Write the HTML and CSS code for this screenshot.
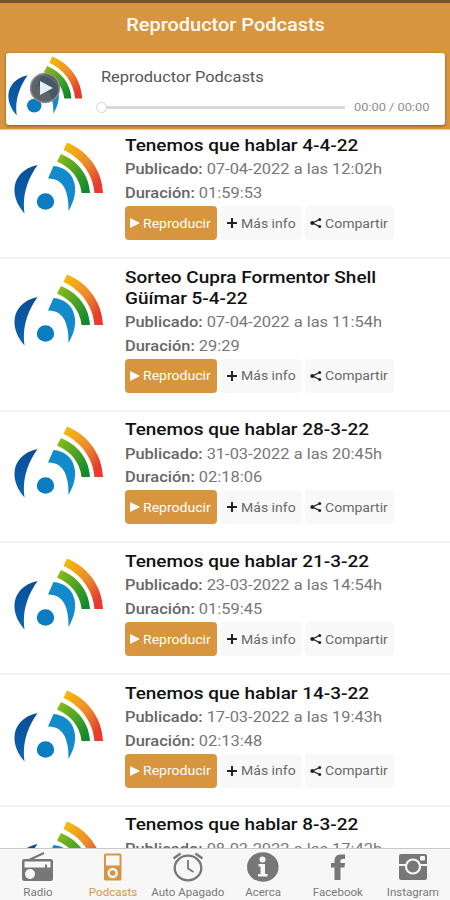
FILE: index.html
```
<!DOCTYPE html>
<html lang="es">
<head>
  <meta charset="UTF-8" />
  <title>Reproductor Podcasts</title>
  <link rel="stylesheet" href="styles.css">
</head>
<body>

<svg class="defs" width="0" height="0">
  <defs>
    <linearGradient id="warm" x1="0" y1="0" x2="1" y2="1">
      <stop offset="0.1" stop-color="#f2b70c" />
      <stop offset="0.5" stop-color="#ec8a2d" />
      <stop offset="0.85" stop-color="#e63b2e" />
    </linearGradient>
    <linearGradient id="green" x1="0" y1="0" x2="1" y2="1">
      <stop offset="0.1" stop-color="#84b81c" />
      <stop offset="0.9" stop-color="#118a2c" />
    </linearGradient>
    <linearGradient id="navy" x1="0" y1="0" x2="0" y2="1">
      <stop offset="0" stop-color="#0a4d96" />
      <stop offset="1" stop-color="#0b66b4" />
    </linearGradient>
    <symbol id="logo" viewBox="0 0 90 72">
      <path fill="url(#warm)" d="M53 0.500C74 9 88 28 89 51H80.500C79 32 67 16 49.500 8Z" />
      <path fill="url(#green)" d="M47 12C64 19 75 33 76 51H67.500C66 36 57 26 43 19.500Z" />
      <path fill="url(#navy)" d="M23.500 23C-1 28 -7 52 10.500 71.500C8 54 13 38 23.500 23Z" />
      <path fill="#118bcb" d="M39.500 24C61 26 67.500 48 54.500 69C55 51 50 36 34 36.500Z" />
      <ellipse cx="31.500" cy="59.500" rx="8.700" ry="8.300" fill="#0b7cc2" />
    </symbol>
    <symbol id="play" viewBox="0 0 10 12"><path fill="currentColor" d="M0 1L10 6L0 11Z" /></symbol>
    <symbol id="plus" viewBox="0 0 10 12"><path stroke="currentColor" stroke-width="2" d="M0 6H10M5 1V11" /></symbol>
    <symbol id="share" viewBox="0 0 12 12">
      <path fill="none" stroke="currentColor" stroke-width="1.300" d="M9.500 2.500L2.500 6L9.500 9.500" />
      <circle cx="9.700" cy="2.500" r="1.500" fill="currentColor" />
      <circle cx="2.300" cy="6" r="2" fill="currentColor" />
      <circle cx="9.700" cy="9.500" r="1.500" fill="currentColor" />
    </symbol>
  </defs>
</svg>

<header>
  <h1><span>Reproductor Podcasts</span></h1>
  <div class="player">
    <div class="cover">
      <svg class="logo"><use href="#logo" /></svg>
      <svg class="cover-play" viewBox="0 0 32 32">
        <circle cx="16" cy="16" r="14.500" fill="#4b5358" fill-opacity="0.9" stroke="#8b9094" stroke-width="1.500" />
        <path fill="#e3eef6" d="M11 9L24 16L11 23Z" />
      </svg>
    </div>
    <div class="track">
      <p><span>Reproductor Podcasts</span></p>
      <div class="progress">
        <i class="knob"></i>
        <i class="bar"></i>
        <span class="time">00:00 / 00:00</span>
      </div>
    </div>
  </div>
</header>

<main id="list"></main>

<nav>
  <a>
    <svg viewBox="0 0 32 30">
      <path stroke="currentColor" stroke-width="2" d="M8 7.500L22 1" />
      <rect x="0" y="7" width="31" height="22" rx="2.500" fill="currentColor" />
      <path fill="#f7f7f7" d="M2.500 9.500H28.500V15.500H25V12.500H23V15.500H2.500Z" />
      <circle cx="8" cy="22" r="5" fill="#f7f7f7" />
    </svg>
    <span>Radio</span>
  </a>
  <a class="active">
    <svg viewBox="0 0 32 30">
      <rect x="7" y="1.500" width="17.500" height="27" rx="1.500" fill="currentColor" />
      <rect x="9" y="3.500" width="13.500" height="10" fill="#f7f7f7" />
      <circle cx="15.700" cy="21" r="4" fill="none" stroke="#f7f7f7" stroke-width="2.500" />
    </svg>
    <span>Podcasts</span>
  </a>
  <a>
    <svg viewBox="0 0 32 30">
      <g fill="none" stroke="currentColor" stroke-width="2.300">
        <ellipse cx="16" cy="16" rx="13.300" ry="12.300" />
        <path d="M16 8V16.500L21.500 20" stroke-width="1.800" />
        <path d="M1.500 6.500L8.500 1.500M23.500 1.500L30.500 6.500" />
      </g>
    </svg>
    <span>Auto Apagado</span>
  </a>
  <a>
    <svg viewBox="0 0 32 30">
      <ellipse cx="15.800" cy="15" rx="15.800" ry="14.800" fill="currentColor" />
      <circle cx="15.500" cy="7.500" r="3" fill="#f7f7f7" />
      <path fill="#f7f7f7" d="M11.500 12H18V22H20.500V24.500H11V22H13.500V14.500H11.500Z" />
    </svg>
    <span>Acerca</span>
  </a>
  <a>
    <svg viewBox="0 0 32 30">
      <path fill="currentColor" d="M12.500 28V15.500H9V11H12.500V9C12.500 4.500 15 2.500 19 2.500H23V7H20.500C19 7 18.500 7.700 18.500 9V11H23L22.500 15.500H18.500V28Z" />
    </svg>
    <span>Facebook</span>
  </a>
  <a>
    <svg viewBox="0 0 32 30">
      <rect x="2" y="2" width="28" height="26" rx="2" fill="currentColor" />
      <path stroke="#f7f7f7" stroke-width="1.800" d="M2 13H9M23 13H30" />
      <circle cx="16" cy="14.500" r="7" fill="currentColor" stroke="#f7f7f7" stroke-width="2.200" />
      <rect x="23" y="4" width="5" height="4.500" rx="1" fill="#f7f7f7" />
    </svg>
    <span>Instagram</span>
  </a>
</nav>

<script src="script.js"></script>
</body>
</html>
```
FILE: styles.css
```
* {
  box-sizing: border-box;
}
body {
  font-family: Roboto, "Liberation Sans", sans-serif;
  background: #fff;
  margin: 0;
  height: 900px;
  display: flex;
  flex-direction: column;
  overflow: hidden;
}
h1, h2, p {
  margin: 0;
}
.defs {
  position: absolute;
}
/* wide lettering, stretched from the left edge */
h2 span, p span, .time, .btn span {
  display: inline-block;
  white-space: nowrap;
  transform: scaleX(1.115);
  transform-origin: left center;
}
p span {
  transform: scaleX(1.095);
}
.btn span {
  transform: scaleX(1.08);
}
header {
  flex: none;
  height: 130px;
  background: #d7953f;
  border-top: 3px solid #70532f;
  border-bottom: 1px solid #efc995;
  padding: 0 5px 0 6px;
}
h1 {
  height: 50px;
  line-height: 44px;
  text-align: center;
  font-size: 19px;
  font-weight: 500;
  color: #fffaf0;
}
h1 span {
  display: inline-block;
  transform: scaleX(1.05);
}
.player {
  height: 72px;
  display: flex;
  background: #fff;
  border-radius: 3px;
  box-shadow: 0 1px 3px #885611;
}
.cover {
  position: relative;
  width: 95px;
  padding: 3px 1.5px;
}
.cover .logo {
  width: 75px;
  height: 60px;
}
.cover-play {
  position: absolute;
  left: 23px;
  top: 19px;
  width: 32px;
  height: 32px;
}
.track {
  flex: 1;
  padding-top: 14px;
}
.track p {
  font-size: 15px;
  line-height: 20px;
  color: #555;
}
.progress {
  display: flex;
  align-items: center;
  height: 14px;
  margin: 13px 0 0 -5px;
}
.knob {
  width: 11px;
  height: 11px;
  border: 1px solid #ccd6df;
  border-radius: 50%;
  background: #fff;
}
.bar {
  width: 238px;
  height: 3px;
  background: #d9d9d9;
}
.time {
  margin-left: 9px;
  font-size: 11.5px;
  color: #909090;
}
main {
  flex: 1;
  overflow: hidden;
}
.item {
  display: flex;
  padding: 14.5px 0 17px 14px;
  border-bottom: 2px solid #f3f3f3;
}
.item:first-child {
  padding-top: 12px;
}
.item .logo {
  flex: none;
  width: 90px;
  height: 72px;
  margin-right: 21px;
}
.item h2 {
  font-size: 17px;
  line-height: 21px;
  font-weight: 500;
  color: #111;
  margin: -7px 0 2.5px;
}
.item h2 span {
  display: block;
}
.item:first-child h2 {
  margin-top: -7.2px;
}
.item p {
  font-size: 15px;
  line-height: 23.6px;
  color: #777;
}
.item b {
  font-weight: 500;
  color: #666;
}
.buttons {
  display: flex;
  gap: 3px;
  margin-top: 0.5px;
}
.btn {
  display: flex;
  align-items: center;
  width: 89px;
  height: 34px;
  padding-left: 5px;
  border-radius: 4px;
  background: #f8f8f8;
  color: #6a6a6a;
  font-size: 13px;
}
.btn svg {
  width: 12px;
  height: 12px;
  margin-right: 3px;
  color: #222;
}
.btn.play {
  width: 92px;
  padding-left: 4px;
  background: #d7953f;
  color: #fff;
}
.btn.play svg {
  color: #fff;
  margin-right: 2px;
}
.btn.more {
  width: 82px;
  padding-left: 6px;
}
nav {
  flex: none;
  display: flex;
  height: 52px;
  background: #f7f7f7;
  border-top: 1px solid #c9c9c9;
}
nav a {
  width: 75px;
  padding-left: 1px;
  display: flex;
  flex-direction: column;
  align-items: center;
  color: #777;
  font-size: 11px;
}
nav svg {
  width: 32px;
  height: 30px;
  margin-top: 3px;
}
nav span {
  margin-top: 3px;
  line-height: 15px;
  white-space: nowrap;
  transform: scaleX(1.05);
}
nav .active {
  color: #d7953f;
}
```
FILE: script.js
```
const podcasts = [
  { title: ['Tenemos que hablar 4-4-22'], date: '07-04-2022 a las 12:02h', time: '01:59:53' },
  { title: ['Sorteo Cupra Formentor Shell', 'Güímar 5-4-22'], date: '07-04-2022 a las 11:54h', time: '29:29' },
  { title: ['Tenemos que hablar 28-3-22'], date: '31-03-2022 a las 20:45h', time: '02:18:06' },
  { title: ['Tenemos que hablar 21-3-22'], date: '23-03-2022 a las 14:54h', time: '01:59:45' },
  { title: ['Tenemos que hablar 14-3-22'], date: '17-03-2022 a las 19:43h', time: '02:13:48' },
  { title: ['Tenemos que hablar 8-3-22'], date: '08-03-2022 a las 17:42h' }
];

// duration and buttons only once the audio length is known
const controls = time => `
      <p><span><b>Duración:</b> ${time}</span></p>
      <div class="buttons">
        <div class="btn play"><svg><use href="#play" /></svg><span>Reproducir</span></div>
        <div class="btn more"><svg><use href="#plus" /></svg><span>Más info</span></div>
        <div class="btn"><svg><use href="#share" /></svg><span>Compartir</span></div>
      </div>`;

document.getElementById('list').innerHTML = podcasts.map(p => `
  <div class="item">
    <svg class="logo"><use href="#logo" /></svg>
    <div>
      <h2>${p.title.map(t => `<span>${t}</span>`).join('')}</h2>
      <p><span><b>Publicado:</b> ${p.date}</span></p>
      ${p.time ? controls(p.time) : ''}
    </div>
  </div>`).join('');
```
